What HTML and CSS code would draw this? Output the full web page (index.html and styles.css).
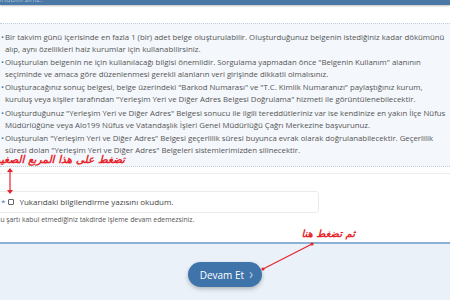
FILE: index.html
```html
<!DOCTYPE html>
<html lang="tr">
<head>
<meta charset="utf-8">
<link rel="stylesheet" href="styles.css">
</head>
<body>
<div class="page">
  <div class="topbar"><span class="topbar-text">kurumlar için kullanabilirsiniz.</span></div>

  <div class="info">
    <ul class="rules">
      <li>Bir takvim günü içerisinde en fazla 1 (bir) adet belge oluşturulabilir. Oluşturduğunuz belgenin istediğiniz kadar dökümünü<br>alıp, aynı özellikleri haiz kurumlar için kullanabilirsiniz.</li>
      <li>Oluşturulan belgenin ne için kullanılacağı bilgisi önemlidir. Sorgulama yapmadan önce "Belgenin Kullanım" alanının<br>seçiminde ve amaca göre düzenlenmesi gerekli alanların veri girişinde dikkatli olmalısınız.</li>
      <li>Oluşturacağınız sonuç belgesi, belge üzerindeki "Barkod Numarası" ve "T.C. Kimlik Numaranızı" paylaştığınız kurum,<br>kuruluş veya kişiler tarafından "Yerleşim Yeri ve Diğer Adres Belgesi Doğrulama" hizmeti ile görüntülenebilecektir.</li>
      <li>Oluşturduğunuz "Yerleşim Yeri ve Diğer Adres" Belgesi sonucu ile ilgili tereddütleriniz var ise kendinize en yakın İlçe Nüfus<br>Müdürlüğüne veya Alo199 Nüfus ve Vatandaşlık İşleri Genel Müdürlüğü Çağrı Merkezine başvurunuz.</li>
      <li>Oluşturulan "Yerleşim Yeri ve Diğer Adres" Belgesi geçerlilik süresi buyunca evrak olarak doğrulanabilecektir. Geçerlilik<br>süresi dolan "Yerleşim Yeri ve Diğer Adres" Belgeleri sistemlerimizden silinecektir.</li>
    </ul>
  </div>

  <div class="divider"></div>

  <div class="confirm">
    <span class="req">*</span>
    <span class="box"></span>
    <span class="confirm-label">Yukarıdaki bilgilendirme yazısını okudum.</span>
  </div>
  <p class="hint">Bu şartı kabul etmediğiniz takdirde işleme devam edemezsiniz.</p>

  <div class="footer">
    <button class="next">Devam Et <span class="chev">&#8250;</span></button>
  </div>

  <div class="note note-box">تضغط على هذا المربع الصغير</div>
  <svg class="arrow-v" width="10" height="28" viewBox="0 0 10 28">
    <line x1="5" y1="2" x2="5" y2="26" stroke="#e8232a" stroke-width="1.2"/>
    <path d="M2 5 L5 1 L8 5 Z" fill="#e8232a"/>
    <path d="M2 23 L5 27 L8 23 Z" fill="#e8232a"/>
  </svg>

  <div class="note note-btn">ثم تضغط هنا</div>
  <svg class="arrow-d" width="56" height="32" viewBox="0 0 56 32">
    <line x1="52" y1="3" x2="3" y2="28" stroke="#e8232a" stroke-width="1.2"/>
    <circle cx="52" cy="3" r="1.6" fill="#e8232a"/>
    <circle cx="3" cy="28" r="1.6" fill="#e8232a"/>
  </svg>
</div>
</body>
</html>
```
FILE: styles.css
```css
* { box-sizing: border-box; }
html, body {
  margin: 0;
  padding: 0;
  width: 450px;
  height: 300px;
  overflow: hidden;
  background: #fff;
}
.page {
  position: relative;
  width: 450px;
  height: 300px;
  overflow: hidden;
  font-family: "Open Sans", "Liberation Sans", sans-serif;
  color: #555;
}
.topbar {
  height: 5px;
  background: #4a78a7;
  box-shadow: 0 1px 2px rgba(0,0,0,0.25);
  overflow: hidden;
  position: relative;
}
.topbar-text {
  display: block;
  margin-top: -6px;
  margin-left: -66px;
  font-size: 7.8px;
  line-height: 10px;
  color: #a9bfd6;
  white-space: nowrap;
}
.info {
  margin-top: 18px;
  background: #f4f7fb;
  border-top: 1px dotted #c5cfda;
  border-bottom: 1px dotted #c5cfda;
  padding: 7px 0 9px 0;
}
.rules {
  list-style: none;
  margin: 0;
  padding: 0 0 0 5px;
  font-size: 7.8px;
  line-height: 12px;
  white-space: nowrap;
}
.rules li {
  position: relative;
  margin-bottom: 1.2px;
}
.rules li::before {
  content: "•";
  position: absolute;
  left: -4px;
  top: 0;
  color: #3a7bbf;
}
.divider {
  margin-top: 6px;
  height: 1px;
  background: #ececec;
}
.confirm {
  margin: 17px 0 0 -6px;
  width: 325px;
  height: 22px;
  border: 1px solid #ebebeb;
  border-radius: 3px;
  display: flex;
  align-items: center;
  gap: 3px;
  padding-left: 6px;
  font-size: 8px;
  color: #444;
}
.req { color: #3a7bbf; font-size: 8px; }
.box {
  width: 6px;
  height: 6px;
  border: 1px solid #666;
  border-radius: 1px;
  margin-right: 2px;
}
.hint {
  margin: 2px 0 0 -4px;
  font-size: 6.8px;
  line-height: 10px;
  color: #555;
}
.footer {
  position: absolute;
  left: 0;
  right: 0;
  top: 242px;
  bottom: 0;
  border-top: 2px solid #8db0d5;
  background: #eaf1f9;
  display: flex;
  justify-content: center;
  align-items: flex-start;
  padding-top: 18px;
}
.next {
  width: 74px;
  height: 25px;
  border: none;
  border-radius: 13px;
  background: #3f74ab;
  color: #fff;
  font-family: "Open Sans", "Liberation Sans", sans-serif;
  font-size: 10px;
  padding: 0 0 0 3px;
  box-shadow: 0 2px 4px rgba(0,0,0,0.25);
  display: flex;
  align-items: center;
  justify-content: center;
  gap: 5px;
}
.chev { color: #b7cde4; font-size: 14px; line-height: 1; margin-top: -2px; }
.note {
  position: absolute;
  color: #e8232a;
  font-family: "DejaVu Sans", sans-serif;
  font-weight: bold;
  font-style: italic;
  direction: rtl;
  white-space: nowrap;
}
.note-box {
  right: 325px;
  top: 153px;
  font-size: 10.5px;
}
.note-btn {
  right: 95px;
  top: 228px;
  font-size: 10px;
}
.arrow-v { position: absolute; left: 5px; top: 167px; }
.arrow-d { position: absolute; left: 260px; top: 241px; }
```
